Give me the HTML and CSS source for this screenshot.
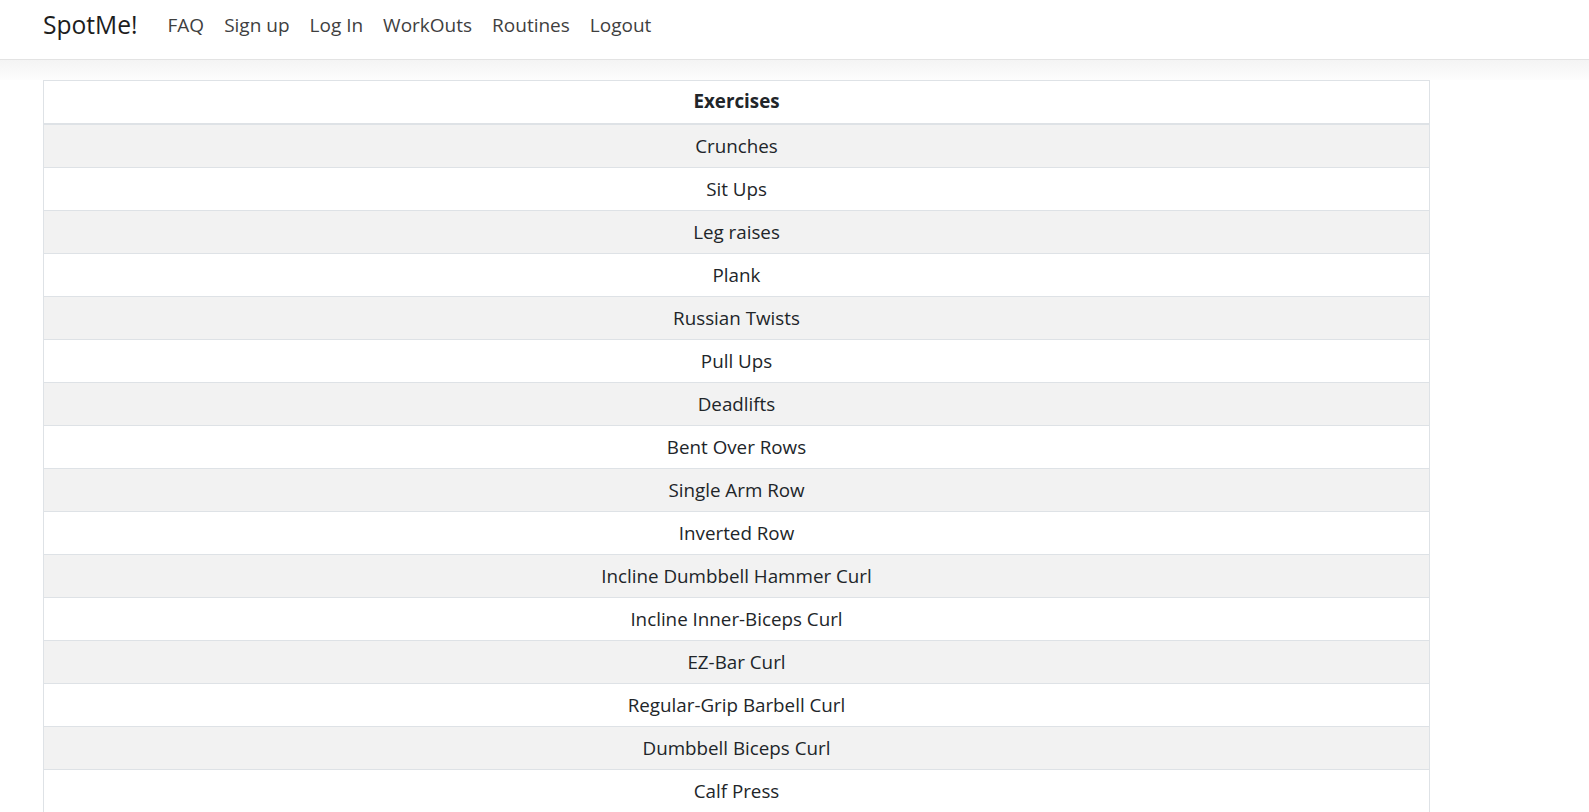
FILE: index.html
```html
<!DOCTYPE html>
<html lang="en">
<head>
<meta charset="utf-8">
<title>SpotMe!</title>
<link rel="stylesheet" href="styles.css">
</head>
<body>
<nav class="navbar">
  <a class="brand" href="#">SpotMe!</a>
  <ul class="nav">
    <li><a class="nav-link" href="#">FAQ</a></li>
    <li><a class="nav-link" href="#">Sign up</a></li>
    <li><a class="nav-link" href="#">Log In</a></li>
    <li><a class="nav-link" href="#">WorkOuts</a></li>
    <li><a class="nav-link" href="#">Routines</a></li>
    <li><a class="nav-link" href="#">Logout</a></li>
  </ul>
</nav>
<div class="shade"></div>
<main class="content">
  <table class="exercises">
    <thead>
      <tr><th>Exercises</th></tr>
    </thead>
    <tbody>
      <tr><td>Crunches</td></tr>
      <tr><td>Sit Ups</td></tr>
      <tr><td>Leg raises</td></tr>
      <tr><td>Plank</td></tr>
      <tr><td>Russian Twists</td></tr>
      <tr><td>Pull Ups</td></tr>
      <tr><td>Deadlifts</td></tr>
      <tr><td>Bent Over Rows</td></tr>
      <tr><td>Single Arm Row</td></tr>
      <tr><td>Inverted Row</td></tr>
      <tr><td>Incline Dumbbell Hammer Curl</td></tr>
      <tr><td>Incline Inner-Biceps Curl</td></tr>
      <tr><td>EZ-Bar Curl</td></tr>
      <tr><td>Regular-Grip Barbell Curl</td></tr>
      <tr><td>Dumbbell Biceps Curl</td></tr>
      <tr><td>Calf Press</td></tr>
    </tbody>
  </table>
</main>
</body>
</html>
```

FILE: styles.css
```css
* { box-sizing: border-box; }

html, body {
  margin: 0;
  padding: 0;
  background: #ffffff;
  font-family: "Open Sans", "Noto Sans", "Liberation Sans", sans-serif;
  color: #212529;
}

.navbar {
  display: flex;
  align-items: flex-start;
  height: 60px;
  padding: 10px 0 0 43px;
  border-bottom: 1px solid #e3e3e3;
  background: #ffffff;
}

.brand {
  font-size: 24.6px;
  color: #1d1d1d;
  text-decoration: none;
  margin-right: 20px;
  line-height: 30px;
}

.nav {
  display: flex;
  list-style: none;
  margin: 0;
  padding: 0;
}

.nav-link {
  display: block;
  padding: 0 10px;
  font-size: 19px;
  line-height: 30px;
  color: #3f3f3f;
  text-decoration: none;
}

.shade {
  height: 20px;
  background: linear-gradient(#f4f4f4, #fdfdfd);
}

.content {
  padding-left: 43px;
}

.exercises {
  width: 1387px;
  border-collapse: collapse;
  border: 1px solid #dee2e6;
  border-top: 0;
  font-size: 18.8px;
}

.exercises th,
.exercises td {
  text-align: center;
  line-height: 30px;
  padding: 6px 6px;
  border-top: 1px solid #dee2e6;
  height: 43px;
}

.exercises th {
  font-weight: 700;
  border-bottom: 2px solid #dee2e6;
  height: 43px;
  padding: 5px 6px 6px;
  background: #ffffff;
}

.exercises tbody tr:nth-child(odd) td {
  background: #f2f2f2;
}
```
